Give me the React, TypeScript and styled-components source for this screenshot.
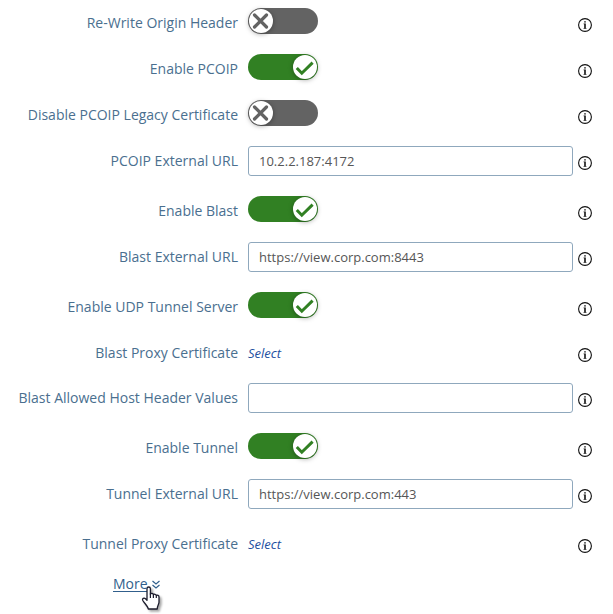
import React, { useId, useState } from "react";
import styled, { createGlobalStyle } from "styled-components";

const GlobalStyle = createGlobalStyle`
  *, *::before, *::after { box-sizing: border-box; }
  body {
    margin: 0;
    background: #fff;
    font-family: "Open Sans", "Noto Sans", sans-serif;
    font-size: 14px;
    color: #4a6f8f;
  }
`;

const Form = styled.form`
  display: flex;
  flex-direction: column;
  padding: 8px 21px 0 0;
`;

const Row = styled.div<{ $height: number }>`
  display: grid;
  grid-template-columns: 238px minmax(0, 1fr) 14px;
  align-items: start;
  height: ${(p) => p.$height}px;
`;

const Label = styled.label`
  line-height: 30px;
  text-align: right;
  white-space: nowrap;
`;

const Control = styled.div`
  display: flex;
  padding: 0 5px 0 10px;
`;

const TextBox = styled.input`
  width: 100%;
  height: 30px;
  padding: 0 10px;
  border: 1px solid #8fa8bd;
  border-radius: 3px;
  background: #fff;
  color: #565656;
  font: inherit;
  font-size: 13px;
  outline: none;
`;

const Switch = styled.span<{ $on: boolean }>`
  display: flex;
  justify-content: ${(p) => (p.$on ? "flex-end" : "flex-start")};
  position: relative;
  width: 70px;
  height: 26px;
  padding: 1px;
  border-radius: 13px;
  background: ${(p) => (p.$on ? "#318023" : "#636363")};
  color: ${(p) => (p.$on ? "#318023" : "#636363")};
`;

const SwitchInput = styled.input`
  position: absolute;
  inset: 0;
  width: 100%;
  height: 100%;
  margin: 0;
  opacity: 0;
  cursor: pointer;
`;

const Knob = styled.span`
  width: 24px;
  height: 24px;
  border-radius: 50%;
  background: #fff;
  box-shadow: 0 1px 5px rgba(0, 0, 0, 0.35);

  svg { display: block; }
`;

const SelectLink = styled.a`
  color: #1d4f9f;
  font-size: 13px;
  font-style: italic;
  line-height: 30px;
  text-decoration: none;
`;

const InfoButton = styled.button`
  width: 14px;
  height: 14px;
  margin-top: 10px;
  padding: 0;
  border: 0;
  background: none;
  color: #111;

  svg { display: block; }
`;

const Footer = styled.div`
  display: flex;
  padding: 0 0 20px 113px;
  line-height: 20px;
`;

const MoreLink = styled.a`
  display: flex;
  align-items: center;
  position: relative;
  color: #315f8c;
  text-decoration: none;
`;

const MoreText = styled.span`
  padding-right: 4px;
  text-decoration: underline;
  text-underline-offset: 2px;
`;

const Pointer = styled.svg`
  position: absolute;
  top: 12px;
  left: 28px;
  filter: drop-shadow(2px 2px 1px rgba(0, 0, 0, 0.35));
`;

const InfoIcon = () => (
  <svg width="14" height="14" viewBox="0 0 14 14" aria-hidden="true">
    <circle cx="7" cy="7" r="6.4" fill="none" stroke="currentColor" strokeWidth="1.1" />
    <path d="M6.2 3.2h1.6v1.4H6.2zM5.6 5.6h2.2v4.4h.6v.7H5.6V10h.6V6.3h-.6z" fill="currentColor" />
  </svg>
);

const CheckIcon = () => (
  <svg width="24" height="24" viewBox="0 0 24 24" aria-hidden="true">
    <path d="M3.8 13l5 5.2L19.6 7.6" fill="none" stroke="currentColor" strokeWidth="3" />
  </svg>
);

const CrossIcon = () => (
  <svg width="24" height="24" viewBox="0 0 24 24" aria-hidden="true">
    <path d="M5.5 6l12 12M17.5 6l-12 12" fill="none" stroke="currentColor" strokeWidth="3.2" strokeLinecap="round" />
  </svg>
);

const ChevronsIcon = () => (
  <svg width="8" height="9" viewBox="0 0 8 9" aria-hidden="true">
    <path d="M.5 1L4 4l3.5-3M.5 5L4 8l3.5-3" fill="none" stroke="currentColor" strokeWidth="1.2" />
  </svg>
);

type Field =
  | { kind: "toggle"; label: string; on: boolean }
  | { kind: "text"; label: string; value: string }
  | { kind: "select"; label: string };

const fields: Field[] = [
  { kind: "toggle", label: "Re-Write Origin Header", on: false },
  { kind: "toggle", label: "Enable PCOIP", on: true },
  { kind: "toggle", label: "Disable PCOIP Legacy Certificate", on: false },
  { kind: "text", label: "PCOIP External URL", value: "10.2.2.187:4172" },
  { kind: "toggle", label: "Enable Blast", on: true },
  { kind: "text", label: "Blast External URL", value: "https://view.corp.com:8443" },
  { kind: "toggle", label: "Enable UDP Tunnel Server", on: true },
  { kind: "select", label: "Blast Proxy Certificate" },
  { kind: "text", label: "Blast Allowed Host Header Values", value: "" },
  { kind: "toggle", label: "Enable Tunnel", on: true },
  { kind: "text", label: "Tunnel External URL", value: "https://view.corp.com:443" },
  { kind: "select", label: "Tunnel Proxy Certificate" },
];

const rowHeights = { toggle: 46, text: 50, select: 45 };

function Toggle({ id, initial }: { id: string; initial: boolean }) {
  const [on, setOn] = useState(initial);
  return (
    <Switch $on={on}>
      <Knob>{on ? <CheckIcon /> : <CrossIcon />}</Knob>
      <SwitchInput id={id} type="checkbox" role="switch" checked={on} onChange={(e) => setOn(e.target.checked)} />
    </Switch>
  );
}

function FieldRow({ field }: { field: Field }) {
  const id = useId();
  return (
    <Row $height={rowHeights[field.kind]}>
      <Label htmlFor={field.kind === "select" ? undefined : id} id={`${id}-label`}>
        {field.label}
      </Label>
      <Control>
        {field.kind === "toggle" && <Toggle id={id} initial={field.on} />}
        {field.kind === "text" && <TextBox id={id} type="text" defaultValue={field.value} />}
        {field.kind === "select" && (
          <SelectLink id={id} href="#select" aria-labelledby={`${id}-label ${id}`}>
            Select
          </SelectLink>
        )}
      </Control>
      <InfoButton type="button" aria-label={`About ${field.label}`}>
        <InfoIcon />
      </InfoButton>
    </Row>
  );
}

export default function App() {
  return (
    <>
      <GlobalStyle />
      <Form>
        {fields.map((field) => (
          <FieldRow key={field.label} field={field} />
        ))}
        <Footer>
          <MoreLink href="#more">
            <MoreText>More</MoreText>
            <ChevronsIcon />
            <Pointer width="20" height="25" viewBox="0 0 20 25" aria-hidden="true">
              <path
                d="M6 2.8c0-2.4 3.4-2.4 3.4 0v5.4c.6-1.2 2.8-1 3 .5.8-.9 2.7-.5 2.9.8 1-.7 2.7-.1 2.7 1.4v5.3c0 1.8-1.6 3-1.8 6.8H7.3c-.3-2.6-3.8-5.6-5.5-8.5-1.1-2 1.2-3.2 2.7-1.8L6 14.2z"
                fill="#fff"
                stroke="#1c1c2c"
                strokeWidth="1.3"
                strokeLinejoin="round"
              />
              <path d="M9.4 7.5V12M12.4 8.5V12M15.3 9.5V12" fill="none" stroke="#1c1c2c" strokeWidth="1.2" />
            </Pointer>
          </MoreLink>
        </Footer>
      </Form>
    </>
  );
}
